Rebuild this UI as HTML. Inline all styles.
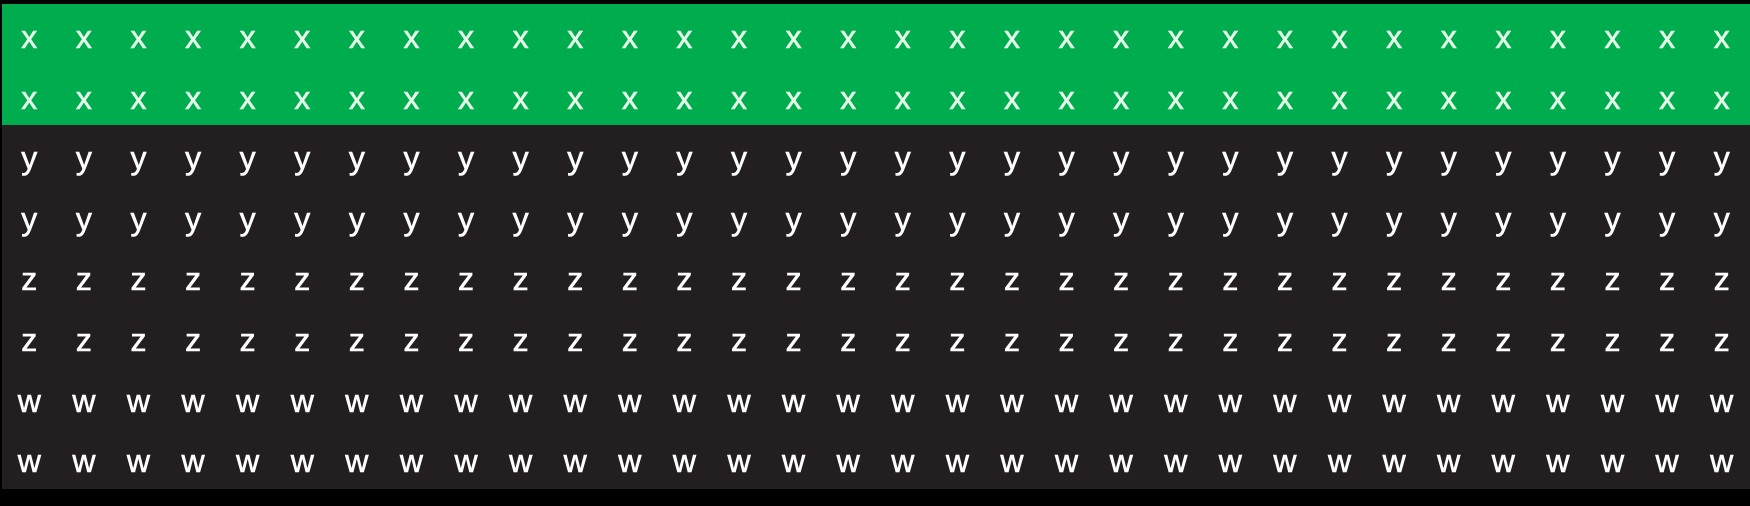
<!DOCTYPE html>
<html><head><style>
html,body{margin:0;padding:0;background:#000;width:1750px;height:506px;overflow:hidden}
#w{position:absolute;left:2px;top:4px;width:1748px;height:485px;background:#231f20}
.r{display:flex;height:60.6px;align-items:center;font-family:"Liberation Sans",sans-serif;font-size:32px;color:#fff;-webkit-text-stroke:0.6px currentColor}
.r span{width:54.6px;text-align:center;display:block;line-height:60.6px;position:relative;top:3px}
.g{background:#00ad4e;color:#e6fbe9}
</style></head><body><div id="w">
<div class="r g"><span>x</span><span>x</span><span>x</span><span>x</span><span>x</span><span>x</span><span>x</span><span>x</span><span>x</span><span>x</span><span>x</span><span>x</span><span>x</span><span>x</span><span>x</span><span>x</span><span>x</span><span>x</span><span>x</span><span>x</span><span>x</span><span>x</span><span>x</span><span>x</span><span>x</span><span>x</span><span>x</span><span>x</span><span>x</span><span>x</span><span>x</span><span>x</span></div>
<div class="r g"><span>x</span><span>x</span><span>x</span><span>x</span><span>x</span><span>x</span><span>x</span><span>x</span><span>x</span><span>x</span><span>x</span><span>x</span><span>x</span><span>x</span><span>x</span><span>x</span><span>x</span><span>x</span><span>x</span><span>x</span><span>x</span><span>x</span><span>x</span><span>x</span><span>x</span><span>x</span><span>x</span><span>x</span><span>x</span><span>x</span><span>x</span><span>x</span></div>
<div class="r"><span>y</span><span>y</span><span>y</span><span>y</span><span>y</span><span>y</span><span>y</span><span>y</span><span>y</span><span>y</span><span>y</span><span>y</span><span>y</span><span>y</span><span>y</span><span>y</span><span>y</span><span>y</span><span>y</span><span>y</span><span>y</span><span>y</span><span>y</span><span>y</span><span>y</span><span>y</span><span>y</span><span>y</span><span>y</span><span>y</span><span>y</span><span>y</span></div>
<div class="r"><span>y</span><span>y</span><span>y</span><span>y</span><span>y</span><span>y</span><span>y</span><span>y</span><span>y</span><span>y</span><span>y</span><span>y</span><span>y</span><span>y</span><span>y</span><span>y</span><span>y</span><span>y</span><span>y</span><span>y</span><span>y</span><span>y</span><span>y</span><span>y</span><span>y</span><span>y</span><span>y</span><span>y</span><span>y</span><span>y</span><span>y</span><span>y</span></div>
<div class="r"><span>z</span><span>z</span><span>z</span><span>z</span><span>z</span><span>z</span><span>z</span><span>z</span><span>z</span><span>z</span><span>z</span><span>z</span><span>z</span><span>z</span><span>z</span><span>z</span><span>z</span><span>z</span><span>z</span><span>z</span><span>z</span><span>z</span><span>z</span><span>z</span><span>z</span><span>z</span><span>z</span><span>z</span><span>z</span><span>z</span><span>z</span><span>z</span></div>
<div class="r"><span>z</span><span>z</span><span>z</span><span>z</span><span>z</span><span>z</span><span>z</span><span>z</span><span>z</span><span>z</span><span>z</span><span>z</span><span>z</span><span>z</span><span>z</span><span>z</span><span>z</span><span>z</span><span>z</span><span>z</span><span>z</span><span>z</span><span>z</span><span>z</span><span>z</span><span>z</span><span>z</span><span>z</span><span>z</span><span>z</span><span>z</span><span>z</span></div>
<div class="r"><span>w</span><span>w</span><span>w</span><span>w</span><span>w</span><span>w</span><span>w</span><span>w</span><span>w</span><span>w</span><span>w</span><span>w</span><span>w</span><span>w</span><span>w</span><span>w</span><span>w</span><span>w</span><span>w</span><span>w</span><span>w</span><span>w</span><span>w</span><span>w</span><span>w</span><span>w</span><span>w</span><span>w</span><span>w</span><span>w</span><span>w</span><span>w</span></div>
<div class="r"><span>w</span><span>w</span><span>w</span><span>w</span><span>w</span><span>w</span><span>w</span><span>w</span><span>w</span><span>w</span><span>w</span><span>w</span><span>w</span><span>w</span><span>w</span><span>w</span><span>w</span><span>w</span><span>w</span><span>w</span><span>w</span><span>w</span><span>w</span><span>w</span><span>w</span><span>w</span><span>w</span><span>w</span><span>w</span><span>w</span><span>w</span><span>w</span></div>
</div></body></html>
